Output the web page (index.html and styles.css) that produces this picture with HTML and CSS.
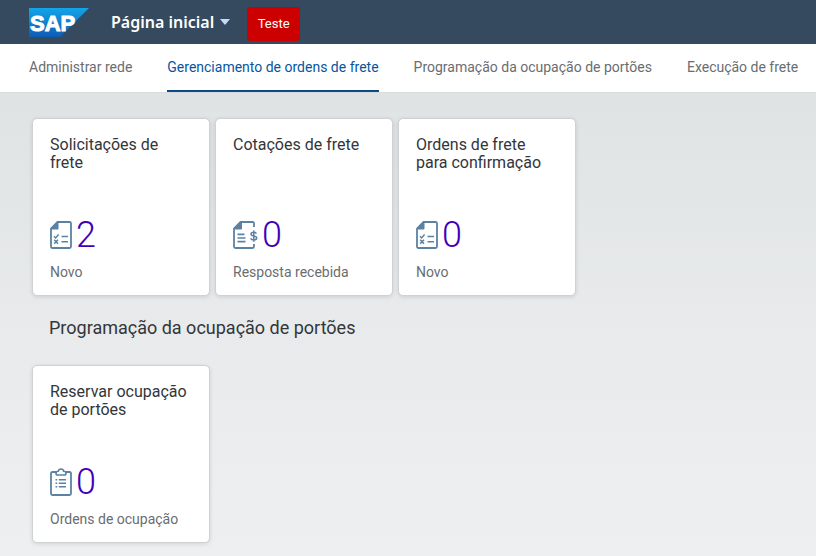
FILE: index.html
```
<!DOCTYPE html>
<html lang="pt">
<head>
    <meta charset="UTF-8">
    <title>Página inicial</title>
    <link rel="stylesheet" href="styles.css">
</head>
<body>
    <svg class="defs" aria-hidden="true">
        <symbol id="icon-task" viewBox="0 0 22 28">
            <path d="M7.5 1H19.5Q21 1 21 2.5V25.5Q21 27 19.5 27H2.5Q1 27 1 25.5V7.5Z" fill="none" stroke="currentColor" stroke-width="1.8"/>
            <path d="M7 1H8.5V7.5Q8.5 8.5 7.5 8.5H1V7Z" fill="currentColor"/>
            <path d="M4 15.3L5.6 17L8.6 13.5M4.2 18.8L8 22.6M8 18.8L4.2 22.6M11.5 15.5H18M11.5 20.7H18" fill="none" stroke="currentColor" stroke-width="1.5"/>
        </symbol>
        <symbol id="icon-quote" viewBox="0 0 25 28">
            <path d="M21 6V2.5Q21 1 19.5 1H7.5L1 7.5V25.5Q1 27 2.5 27H19.5Q21 27 21 25.5V23" fill="none" stroke="currentColor" stroke-width="1.8"/>
            <path d="M7 1H9V7.5Q9 8.5 8 8.5H1V7Z" fill="currentColor"/>
            <path d="M4.5 13.3H11.5M4.5 17H12.5M4.5 20.7H12.5" fill="none" stroke="currentColor" stroke-width="1.7"/>
            <path d="M23.4 12.6Q22.8 11.2 20.7 11.2Q18 11.2 18 13Q18 14.4 20.7 14.9Q23.7 15.4 23.7 17Q23.7 18.9 20.8 18.9Q18.4 18.9 17.6 17.3M20.8 9.4V20.7" fill="none" stroke="currentColor" stroke-width="1.5"/>
        </symbol>
        <symbol id="icon-clipboard" viewBox="0 0 22 28">
            <path d="M6 4H2.5Q1 4 1 5.5V25.5Q1 27 2.5 27H19.5Q21 27 21 25.5V5.5Q21 4 19.5 4H16" fill="none" stroke="currentColor" stroke-width="1.8"/>
            <path d="M6 5.2Q6 3.2 8.3 3.2Q8.6 1 11 1Q13.4 1 13.7 3.2Q16 3.2 16 5.2Q16 7 14.3 7H7.7Q6 7 6 5.2Z" fill="none" stroke="currentColor" stroke-width="1.6"/>
            <path d="M5.5 11.7H7.2M8.8 11.7H16M5.5 15.2H7.2M8.8 15.2H16M5.5 18.7H7.2M8.8 18.7H16" fill="none" stroke="currentColor" stroke-width="1.6"/>
        </symbol>
    </svg>

    <header class="shell">
        <svg class="logo" viewBox="0 0 60 29" role="img" aria-label="SAP">
            <defs>
                <linearGradient id="sap-blue" x1="0" y1="0" x2="0" y2="1">
                    <stop offset="0" stop-color="#12a6e8"/>
                    <stop offset="1" stop-color="#0d5cb4"/>
                </linearGradient>
            </defs>
            <path d="M0 0H60L31 29H0Z" fill="url(#sap-blue)"/>
            <text class="logo-text" x="1" y="23">SAP</text>
        </svg>
        <button type="button" class="home-menu">Página inicial
            <svg class="arrow" viewBox="0 0 10 6" aria-hidden="true"><path d="M0 0H10L5 6Z" fill="#c4dcfa"/></svg>
        </button>
        <button type="button" class="test-btn">Teste</button>
    </header>

    <nav class="tabs">
        <a href="#rede">Administrar rede</a>
        <a href="#ordens" class="active" aria-current="page">Gerenciamento de ordens de frete</a>
        <a href="#portoes">Programação da ocupação de portões</a>
        <a href="#execucao">Execução de frete</a>
    </nav>

    <main class="content">
        <section class="tiles" id="ordens">
            <a href="#solicitacoes" class="tile">
                <h3>Solicitações de frete</h3>
                <div class="kpi"><svg class="icon"><use href="#icon-task"/></svg><span>2</span></div>
                <p>Novo</p>
            </a>
            <a href="#cotacoes" class="tile">
                <h3>Cotações de frete</h3>
                <div class="kpi"><svg class="icon wide"><use href="#icon-quote"/></svg><span>0</span></div>
                <p>Resposta recebida</p>
            </a>
            <a href="#confirmacao" class="tile">
                <h3>Ordens de frete para confirmação</h3>
                <div class="kpi"><svg class="icon"><use href="#icon-task"/></svg><span>0</span></div>
                <p>Novo</p>
            </a>
        </section>
        <h2>Programação da ocupação de portões</h2>
        <section class="tiles" id="portoes">
            <a href="#reservar" class="tile">
                <h3>Reservar ocupação de portões</h3>
                <div class="kpi"><svg class="icon"><use href="#icon-clipboard"/></svg><span>0</span></div>
                <p>Ordens de ocupação</p>
            </a>
        </section>
    </main>
</body>
</html>
```
FILE: styles.css
```
*{
    box-sizing: border-box;
}
body{
    margin: 0;
    min-height: 100vh;
    display: flex;
    flex-direction: column;
    font-family: Roboto, "Liberation Sans", sans-serif;
    font-size: 14px;
    color: #32363a;
}
h2,h3,p{
    margin: 0;
    font-weight: normal;
}
a{
    text-decoration: none;
    color: inherit;
}
button{
    border: none;
    font-family: inherit;
    cursor: pointer;
}
.defs{
    display: none;
}
.shell{
    display: flex;
    align-items: center;
    height: 44px;
    padding: 0 29px;
    background-color: #354a5f;
}
.logo{
    width: 60px;
    height: 29px;
}
.logo-text{
    font-family: "Liberation Sans", sans-serif;
    font-size: 22px;
    font-weight: bold;
    fill: #ffffff;
    stroke: #ffffff;
    stroke-width: 1px;
}
.home-menu{
    display: flex;
    align-items: center;
    gap: 6px;
    margin-left: 22px;
    padding: 0;
    background: none;
    font-family: "Noto Sans", sans-serif;
    font-size: 16px;
    font-weight: 600;
    line-height: 20px;
    color: #ffffff;
}
.arrow{
    width: 10px;
    height: 6px;
}
.test-btn{
    margin: 3px 0 0 17px;
    width: 53px;
    height: 34px;
    padding: 0;
    border-radius: 4px;
    background-color: #cc0000;
    font-size: 13px;
    color: #ffffff;
}
.tabs{
    display: flex;
    gap: 35px;
    height: 49px;
    padding: 0 29px;
    background-color: #ffffff;
    border-bottom: 1px solid #d9dcdc;
    white-space: nowrap;
    line-height: 46px;
    color: #6a6d70;
}
.tabs .active{
    color: #0854a0;
    border-bottom: 2px solid #0f4a86;
}
.content{
    flex: 1;
    padding: 25px 32px 13px;
    background: linear-gradient(#dfe3e3, #e8eaeb 50%, #eeeff1);
}
.tiles{
    display: flex;
    flex-wrap: wrap;
    gap: 5px;
}
.tile{
    display: flex;
    flex-direction: column;
    width: 178px;
    height: 178px;
    padding: 17px 17px 13px;
    background-color: #ffffff;
    border: 1px solid #cfd2d3;
    border-radius: 5px;
    box-shadow: 0 1px 4px rgba(0,0,0,.12);
}
.tile h3{
    height: 75px;
    font-size: 16px;
    line-height: 18px;
}
.kpi{
    display: flex;
    align-items: center;
    gap: 4px;
    height: 48px;
    font-size: 36px;
    font-weight: 300;
    line-height: 48px;
    color: #4100b8;
}
.icon{
    width: 22px;
    height: 28px;
    color: #5b82a3;
}
.icon.wide{
    width: 25px;
}
.tile p{
    margin-top: 4px;
    line-height: 18px;
    color: #6a6d70;
}
h2{
    padding: 20px 17px 25px;
    font-size: 18px;
    line-height: 24px;
}
```
